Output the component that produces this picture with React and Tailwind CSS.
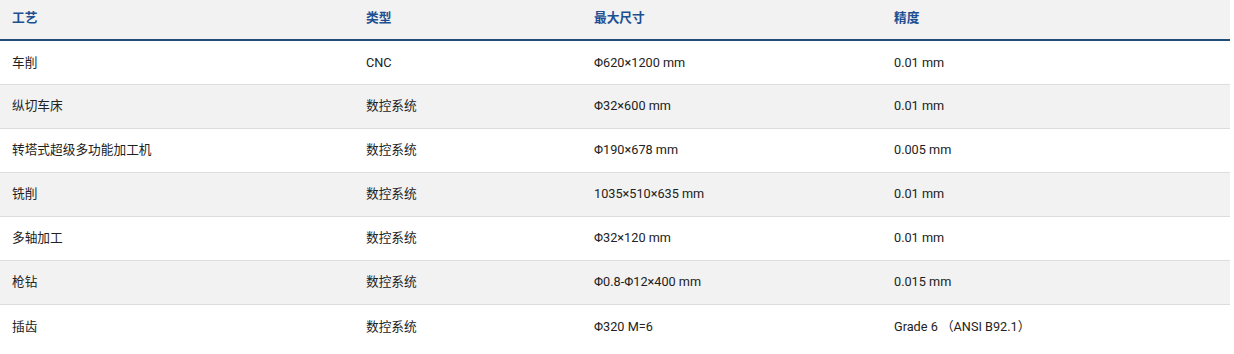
const rows = [
  ["车削", "CNC", "Φ620×1200 mm", "0.01 mm"],
  ["纵切车床", "数控系统", "Φ32×600 mm", "0.01 mm"],
  ["转塔式超级多功能加工机", "数控系统", "Φ190×678 mm", "0.005 mm"],
  ["铣削", "数控系统", "1035×510×635 mm", "0.01 mm"],
  ["多轴加工", "数控系统", "Φ32×120 mm", "0.01 mm"],
  ["枪钻", "数控系统", "Φ0.8-Φ12×400 mm", "0.015 mm"],
  ["插齿", "数控系统", "Φ320 M=6", "Grade 6 （ANSI B92.1）"],
];

export default function App() {
  return (
    <div className="w-[1230px] bg-white font-['Roboto','Noto_Sans_CJK_SC',sans-serif] text-[12.7px] text-[#222]">
      <table className="w-full border-collapse">
        <colgroup>
          <col className="w-[354px]" />
          <col className="w-[228px]" />
          <col className="w-[300px]" />
          <col />
        </colgroup>
        <thead>
          <tr className="h-[40px] bg-[#f2f2f2] border-b-2 border-[#1f4e79]">
            {["工艺", "类型", "最大尺寸", "精度"].map((h) => (
              <th key={h} className="px-3 pb-[4px] text-left font-bold text-[#1d4f91]">
                {h}
              </th>
            ))}
          </tr>
        </thead>
        <tbody>
          {rows.map((r, i) => (
            <tr
              key={r[0]}
              className={`h-[44px] ${i < rows.length - 1 ? "border-b border-[#dddddd]" : ""} ${
                i % 2 === 1 ? "bg-[#f2f2f2]" : "bg-white"
              }`}
            >
              {r.map((c, j) => (
                <td key={j} className="px-3 text-left whitespace-pre">
                  {c}
                </td>
              ))}
            </tr>
          ))}
        </tbody>
      </table>
    </div>
  );
}
